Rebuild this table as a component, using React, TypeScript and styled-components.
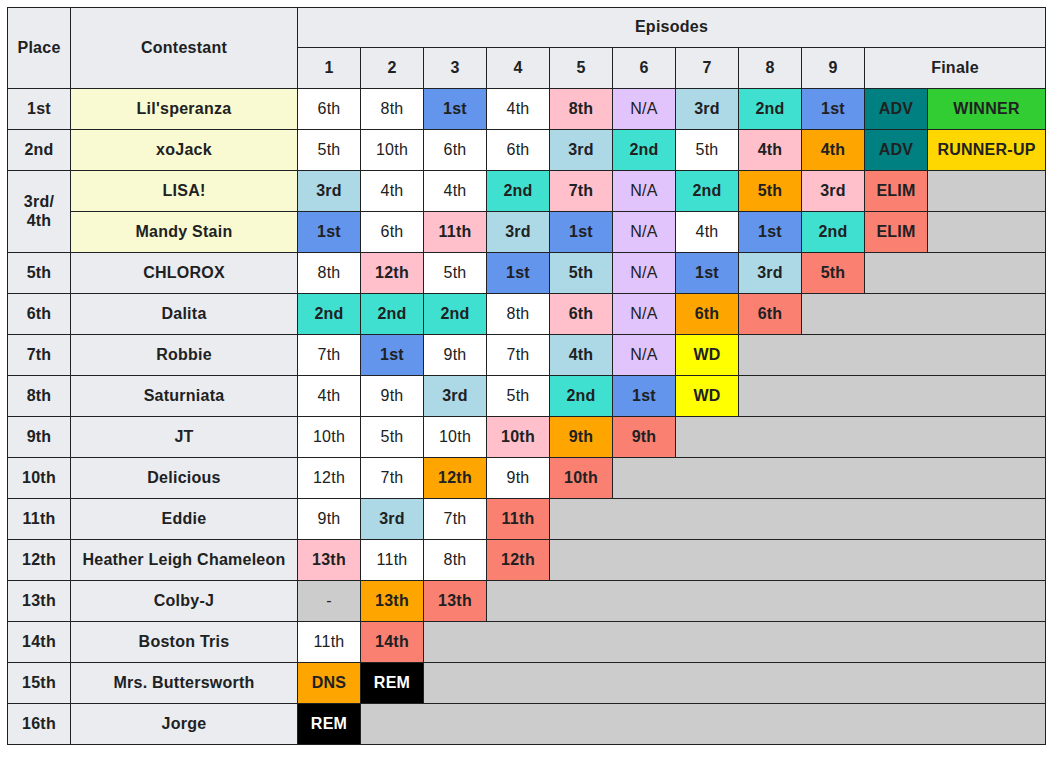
import styled, { createGlobalStyle } from 'styled-components';

const GlobalStyle = createGlobalStyle`
  html, body {
    margin: 0;
    padding: 0;
    background: #fff;
  }
  body {
    font-family: 'Liberation Sans', Arial, sans-serif;
    color: #202122;
  }
`;

type Tone =
  | 'white'
  | 'blue'
  | 'pink'
  | 'purple'
  | 'lightblue'
  | 'turquoise'
  | 'orange'
  | 'salmon'
  | 'teal'
  | 'green'
  | 'gold'
  | 'yellow'
  | 'black'
  | 'gray';

const toneColors: Record<Tone, string> = {
  white: '#ffffff',
  blue: '#6495ed',
  pink: '#ffc0cb',
  purple: '#e2c4fd',
  lightblue: '#add8e6',
  turquoise: '#40e0d0',
  orange: '#ffa500',
  salmon: '#fa8072',
  teal: '#008080',
  green: '#32cd32',
  gold: '#ffd700',
  yellow: '#ffff00',
  black: '#000000',
  gray: '#cccccc',
};

const Page = styled.div`
  padding: 7px 7px 12px 7px;
`;

const Table = styled.table`
  border-collapse: collapse;
  table-layout: fixed;
  width: 1038px;
  font-size: 16px;
  line-height: 19px;
  letter-spacing: 0.25px;

  th,
  td {
    border: 1px solid #202122;
    text-align: center;
    vertical-align: middle;
    padding: 0 6px 2px;
  }
`;

const HeadRow = styled.tr<{ $h: number }>`
  height: ${(p) => p.$h}px;
`;

const BodyRow = styled.tr`
  height: 41px;
`;

const HeadCell = styled.th`
  background: #eaecf0;
  font-weight: 700;
`;

const PlaceCell = styled.td`
  background: #eaecf0;
  font-weight: 700;
`;

const NameCell = styled.td<{ $finalist?: boolean }>`
  background: ${(p) => (p.$finalist ? '#fafad2' : '#eaecf0')};
  font-weight: 700;
`;

const ResultCell = styled.td<{ $tone: Tone }>`
  background: ${(p) => toneColors[p.$tone]};
  color: ${(p) => (p.$tone === 'black' ? '#ffffff' : '#202122')};
  font-weight: ${(p) =>
    p.$tone === 'white' || p.$tone === 'purple' || p.$tone === 'gray'
      ? 400
      : 700};
  white-space: nowrap;
`;

const FillCell = styled.td`
  background: #cccccc;
`;

type Result = [string, Tone];

type Contestant = {
  place?: React.ReactNode;
  placeSpan?: number;
  name: string;
  finalist?: boolean;
  results: Result[];
};

const W = (t: string): Result => [t, 'white'];
const NA: Result = ['N/A', 'purple'];

const contestants: Contestant[] = [
  {
    place: '1st',
    name: "Lil'speranza",
    finalist: true,
    results: [
      W('6th'),
      W('8th'),
      ['1st', 'blue'],
      W('4th'),
      ['8th', 'pink'],
      NA,
      ['3rd', 'lightblue'],
      ['2nd', 'turquoise'],
      ['1st', 'blue'],
      ['ADV', 'teal'],
      ['WINNER', 'green'],
    ],
  },
  {
    place: '2nd',
    name: 'xoJack',
    finalist: true,
    results: [
      W('5th'),
      W('10th'),
      W('6th'),
      W('6th'),
      ['3rd', 'lightblue'],
      ['2nd', 'turquoise'],
      W('5th'),
      ['4th', 'pink'],
      ['4th', 'orange'],
      ['ADV', 'teal'],
      ['RUNNER-UP', 'gold'],
    ],
  },
  {
    place: (
      <>
        3rd/
        <br />
        4th
      </>
    ),
    placeSpan: 2,
    name: 'LISA!',
    finalist: true,
    results: [
      ['3rd', 'lightblue'],
      W('4th'),
      W('4th'),
      ['2nd', 'turquoise'],
      ['7th', 'pink'],
      NA,
      ['2nd', 'turquoise'],
      ['5th', 'orange'],
      ['3rd', 'pink'],
      ['ELIM', 'salmon'],
    ],
  },
  {
    name: 'Mandy Stain',
    finalist: true,
    results: [
      ['1st', 'blue'],
      W('6th'),
      ['11th', 'pink'],
      ['3rd', 'lightblue'],
      ['1st', 'blue'],
      NA,
      W('4th'),
      ['1st', 'blue'],
      ['2nd', 'turquoise'],
      ['ELIM', 'salmon'],
    ],
  },
  {
    place: '5th',
    name: 'CHLOROX',
    results: [
      W('8th'),
      ['12th', 'pink'],
      W('5th'),
      ['1st', 'blue'],
      ['5th', 'lightblue'],
      NA,
      ['1st', 'blue'],
      ['3rd', 'lightblue'],
      ['5th', 'salmon'],
    ],
  },
  {
    place: '6th',
    name: 'Dalita',
    results: [
      ['2nd', 'turquoise'],
      ['2nd', 'turquoise'],
      ['2nd', 'turquoise'],
      W('8th'),
      ['6th', 'pink'],
      NA,
      ['6th', 'orange'],
      ['6th', 'salmon'],
    ],
  },
  {
    place: '7th',
    name: 'Robbie',
    results: [
      W('7th'),
      ['1st', 'blue'],
      W('9th'),
      W('7th'),
      ['4th', 'lightblue'],
      NA,
      ['WD', 'yellow'],
    ],
  },
  {
    place: '8th',
    name: 'Saturniata',
    results: [
      W('4th'),
      W('9th'),
      ['3rd', 'lightblue'],
      W('5th'),
      ['2nd', 'turquoise'],
      ['1st', 'blue'],
      ['WD', 'yellow'],
    ],
  },
  {
    place: '9th',
    name: 'JT',
    results: [
      W('10th'),
      W('5th'),
      W('10th'),
      ['10th', 'pink'],
      ['9th', 'orange'],
      ['9th', 'salmon'],
    ],
  },
  {
    place: '10th',
    name: 'Delicious',
    results: [
      W('12th'),
      W('7th'),
      ['12th', 'orange'],
      W('9th'),
      ['10th', 'salmon'],
    ],
  },
  {
    place: '11th',
    name: 'Eddie',
    results: [W('9th'), ['3rd', 'lightblue'], W('7th'), ['11th', 'salmon']],
  },
  {
    place: '12th',
    name: 'Heather Leigh Chameleon',
    results: [['13th', 'pink'], W('11th'), W('8th'), ['12th', 'salmon']],
  },
  {
    place: '13th',
    name: 'Colby-J',
    results: [
      ['-', 'gray'],
      ['13th', 'orange'],
      ['13th', 'salmon'],
    ],
  },
  {
    place: '14th',
    name: 'Boston Tris',
    results: [W('11th'), ['14th', 'salmon']],
  },
  {
    place: '15th',
    name: 'Mrs. Buttersworth',
    results: [
      ['DNS', 'orange'],
      ['REM', 'black'],
    ],
  },
  {
    place: '16th',
    name: 'Jorge',
    results: [['REM', 'black']],
  },
];

const TOTAL_COLUMNS = 11;
const episodes = [1, 2, 3, 4, 5, 6, 7, 8, 9];

const App = () => {
  return (
    <Page>
      <GlobalStyle />
      <Table>
        <colgroup>
          <col style={{ width: 63 }} />
          <col style={{ width: 227 }} />
          {episodes.map((ep) => (
            <col key={ep} style={{ width: 63 }} />
          ))}
          <col style={{ width: 63 }} />
          <col style={{ width: 118 }} />
        </colgroup>
        <thead>
          <HeadRow $h={40}>
            <HeadCell rowSpan={2}>Place</HeadCell>
            <HeadCell rowSpan={2}>Contestant</HeadCell>
            <HeadCell colSpan={TOTAL_COLUMNS}>Episodes</HeadCell>
          </HeadRow>
          <HeadRow $h={41}>
            {episodes.map((ep) => (
              <HeadCell key={ep}>{ep}</HeadCell>
            ))}
            <HeadCell colSpan={2}>Finale</HeadCell>
          </HeadRow>
        </thead>
        <tbody>
          {contestants.map((c) => {
            const rest = TOTAL_COLUMNS - c.results.length;
            return (
              <BodyRow key={c.name}>
                {c.place && (
                  <PlaceCell rowSpan={c.placeSpan}>{c.place}</PlaceCell>
                )}
                <NameCell $finalist={c.finalist}>{c.name}</NameCell>
                {c.results.map(([text, tone], i) => (
                  <ResultCell key={i} $tone={tone}>
                    {text}
                  </ResultCell>
                ))}
                {rest > 0 && <FillCell colSpan={rest} />}
              </BodyRow>
            );
          })}
        </tbody>
      </Table>
    </Page>
  );
};

export default App;
